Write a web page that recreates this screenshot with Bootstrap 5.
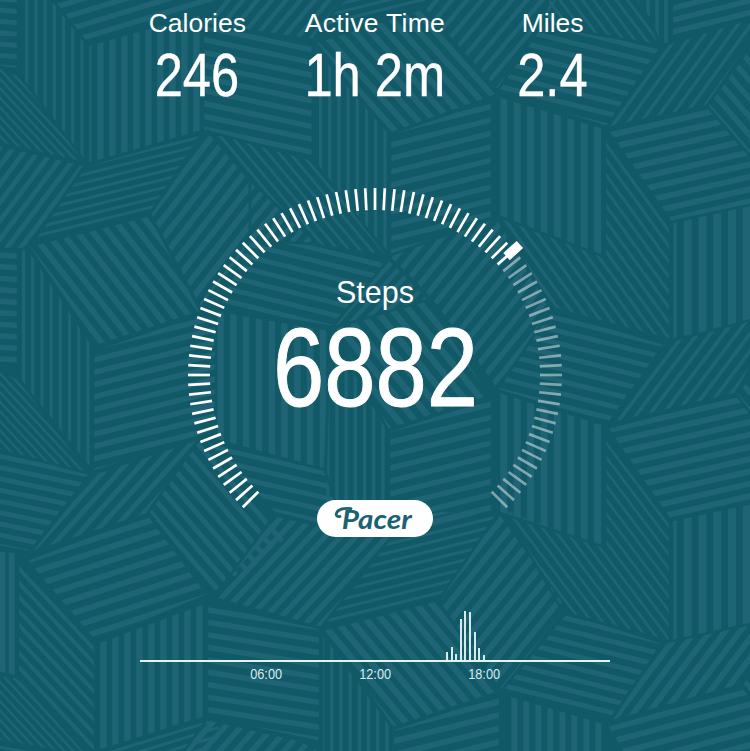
<!DOCTYPE html>
<html lang="en">
<head>
    <meta charset="UTF-8">
    <meta name="viewport" content="width=device-width, initial-scale=1.0">
    <title>Pacer</title>
    <link href="https://cdn.jsdelivr.net/npm/bootstrap@5.3.0/dist/css/bootstrap.min.css" rel="stylesheet">
    <style>
        body {
            background-color: #125967;
            font-family: "Liberation Sans", Arial, sans-serif;
            line-height: 1;
        }
        .pacer-screen {
            width: 750px;
            height: 751px;
        }
        .pattern {
            z-index: 0;
        }
        .pacer-content {
            z-index: 1;
        }
        .stats {
            width: 533px;
            height: 188px;
            padding-top: 9px;
        }
        .stat-label {
            font-size: 26.5px;
            line-height: 28px;
        }
        .stat-label.wide {
            letter-spacing: .3px;
        }
        .stat-value {
            font-size: 61px;
            line-height: 60px;
            margin-top: 8px;
            -webkit-text-stroke: .4px #fff;
        }
        .squeeze {
            display: inline-block;
            white-space: nowrap;
            transform: scaleX(.83);
        }
        .gauge {
            width: 400px;
            height: 423px;
        }
        .gauge > * {
            grid-area: 1 / 1;
        }
        .gauge svg {
            overflow: visible;
        }
        .steps-label {
            font-size: 30.5px;
            line-height: 32px;
            margin-top: 88px;
        }
        .steps-value {
            font-size: 111px;
            line-height: 112px;
            margin-top: 4px;
            -webkit-text-stroke: 1px #fff;
        }
        .brand-pill {
            width: 116px;
            height: 37px;
            margin-top: 76px;
            background-color: #fff;
            color: #1a6273;
            font: italic 700 27px/37px Lato, sans-serif;
        }
        .brand-name {
            display: inline-block;
            margin-left: 3px;
            transform: scaleX(1.1);
            transform-origin: center;
        }
        .brand-swash {
            top: 6px;
            left: 17px;
        }
        .hours {
            width: 470px;
        }
        .hour-bars {
            height: 49px;
            gap: 2.55px;
            padding-left: 306.3px;
            box-sizing: content-box;
            border-bottom: 2px solid #e3f5f3;
        }
        .hour-bars div {
            width: 2px;
            background-color: #d5ecec;
        }
        .hour-labels {
            width: 326px;
            margin-left: 72px;
            font-size: 14.5px;
            line-height: 16px;
            padding-top: 4px;
            color: #dcebed;
        }
        .hour-labels .squeeze {
            transform: scaleX(.88);
        }
    </style>
</head>
<body>
    <main class="pacer-screen position-relative overflow-hidden text-white">
        <svg class="pattern position-absolute top-0 start-0" id="pattern" width="750" height="751" viewBox="0 0 750 751" aria-hidden="true"></svg>

        <div class="pacer-content position-relative d-flex flex-column align-items-center">
            <div class="stats">
                <div class="row g-0 text-center">
                    <div class="col-4">
                        <div class="stat-label">Calories</div>
                        <div class="stat-value"><span class="squeeze">246</span></div>
                    </div>
                    <div class="col-4">
                        <div class="stat-label wide">Active Time</div>
                        <div class="stat-value"><span class="squeeze">1h 2m</span></div>
                    </div>
                    <div class="col-4">
                        <div class="stat-label">Miles</div>
                        <div class="stat-value"><span class="squeeze">2.4</span></div>
                    </div>
                </div>
            </div>

            <div class="gauge d-grid">
                <svg id="dial" width="400" height="400" viewBox="175 188 400 400" aria-hidden="true"></svg>
                <div class="d-flex flex-column align-items-center">
                    <div class="steps-label">Steps</div>
                    <div class="steps-value"><span class="squeeze">6882</span></div>
                    <div class="brand-pill rounded-pill text-center position-relative">
                        <svg class="brand-swash position-absolute" width="20" height="16" viewBox="0 0 20 16" fill="none" stroke="#1a6273" stroke-width="2.8" stroke-linecap="round" aria-hidden="true">
                            <path d="M6 10.5C1.5 11.5 1 7 4.5 4.5C8 2 12 1.9 17 2.6"/>
                        </svg>
                        <span class="brand-name">Pacer</span>
                    </div>
                </div>
            </div>

            <div class="hours">
                <div class="hour-bars d-flex align-items-end" id="hourBars"></div>
                <div class="hour-labels d-flex justify-content-between">
                    <div class="text-center w-100"><span class="squeeze">06:00</span></div>
                    <div class="text-center w-100"><span class="squeeze">12:00</span></div>
                    <div class="text-center w-100"><span class="squeeze">18:00</span></div>
                </div>
            </div>
        </div>
    </main>

    <script src="https://cdn.jsdelivr.net/npm/bootstrap@5.3.0/dist/js/bootstrap.bundle.min.js"></script>
    <script>
        // [corner points, stripe angle in degrees, pitch, stripe width]
        const tiles = [
            ['-10,-8 18,-6 18,69 -10,66', 4, 11.3, 5],
            ['19,-10 45,-10 87,44 87,164 19,80', 90, 9.2, 3.2],
            ['45,-10 88,45 203,13 270,-10 240,-40', -17, 12.5, 5.5],
            ['88,45 203,13 203,131 88,164', 90, 12, 6.5],
            ['203,25 313,43 313,158 203,131', 12, 12.5, 5.5],
            ['203,24 225,-5 345,-5 313,40', -50, 11, 4.5],
            ['318,33 345,-2 430,-2 421,8', -14, 8, 3],
            ['315,42 421,9 500,94 390,134', 48, 12, 6],
            ['423,8 432,-4 560,-4 499,92', -50, 11.5, 4.5],
            ['313,45 390,134 390,256 313,164', 90, 9.2, 3.2],
            ['390,134 492,99 492,220 390,256', -14, 13, 5.5],
            ['496,95 605,128 605,258 496,215', 90, 13.4, 7],
            ['542,24 662,46 607,127 496,93', 14, 12, 5],
            ['550,-5 641,-5 660,46 542,24', 53, 9, 3],
            ['637,-5 671,-5 671,46 662,46', 90, 9, 3.5],
            ['672,-10 755,-20 755,16 672,41', -14, 11.5, 5.5],
            ['664,45 755,17 755,35 707,106 607,128', -54, 10.5, 3.5],
            ['755,40 755,162 707,106', 49, 12, 5.5],
            ['607,130 707,106 755,162 755,204 671,222', -13, 12, 6],
            ['672,222 755,204 755,322 672,340', 90, 14.8, 8],
            ['605,136 670,224 670,340 551,308 497,216 605,257', 54, 9, 3.2],
            ['-5,65 20,76 87,164 -5,142', 47, 6.5, 2.5],
            ['-5,144 85,165 28,249 -5,249', -53, 11, 5],
            ['85,166 203,132 150,214 32,243', -14, 8, 3],
            ['208,131 250,180 250,247 200,308 150,214', -52, 12, 6],
            ['28,246 150,215 201,312 97,346', 52, 12.2, 6],
            ['18,250 28,248 93,346 93,472 18,378', 90, 9.2, 3.2],
            ['-5,250 18,250 18,370 -5,366', 4, 11.5, 5.5],
            ['93,350 201,314 218,320 218,430 93,472', -14, 12, 5.5],
            ['-5,366 20,380 90,474 -5,450', 47, 6.5, 2.5],
            ['-5,449 90,474 30,552 -5,546', 12, 11, 5],
            ['93,474 200,438 148,514 30,553', -48, 11.5, 5],
            ['200,438 288,538 213,594 148,512', 49, 11.5, 5],
            ['26,560 148,514 208,595 95,642', -18, 12.8, 6],
            ['96,643 206,602 206,717 96,752', 90, 12, 6.5],
            ['18,560 95,644 95,760 18,690', 47, 9.6, 4],
            ['-5,550 17,552 17,677 -5,672', 90, 9.5, 6],
            ['-5,675 18,677 90,757 -5,740', 47, 6.5, 2.5],
            ['-5,742 60,757 -5,757', 10, 8, 3],
            ['207,603 320,628 320,742 207,718', 9, 12.3, 5.5],
            ['96,752 207,719 225,730 205,757 96,757', -17, 8, 3],
            ['207,719 300,740 330,757 180,757', -48, 12, 5.5],
            ['275,515 345,532 392,536 321,628 213,598', -47, 11.3, 5.5],
            ['392,536 435,510 497,515 439,600 321,628', -14, 8.5, 3],
            ['322,630 437,600 499,692 393,728', 50, 12, 6.5],
            ['322,632 392,727 392,757 322,757', 90, 9.2, 3.5],
            ['393,729 500,694 500,757 393,757', -14, 13, 6],
            ['499,512 567,607 501,692 438,601', -51, 12, 6],
            ['505,694 605,723 605,757 505,757', 90, 12, 6],
            ['567,612 663,643 609,722 501,691', 14, 11.5, 5],
            ['605,435 670,520 670,642 563,612 503,508 605,547', 53, 8.5, 2.8],
            ['672,520 755,502 755,625 672,642', 90, 14.8, 8],
            ['663,643 755,623 755,655 741,685 610,722', -53, 12, 6],
            ['755,665 755,698 741,686', 49, 12, 5],
            ['607,726 741,686 755,700 755,757 625,757', -15, 13, 6],
            ['672,341 755,319 755,358 736,394 609,424', -53, 10.5, 3.8],
            ['755,370 755,420 736,394', 49, 12, 5],
            ['607,428 736,394 755,420 755,502 670,520', -13, 12, 6],
            ['551,310 665,344 608,424 497,390', 14, 12, 5],
            ['497,391 605,425 605,547 497,512', 90, 13.4, 7],
            ['388,256 497,217 551,310 497,390 432,300', -51, 12, 5.5],
            ['332,328 388,258 430,300', -48, 10, 4.5],
            ['210,132 313,160 388,256 320,246 250,180', 50, 8.5, 3],
            ['250,180 320,246 250,240', -50, 11, 5],
            ['250,240 313,244 388,260 332,327 218,308', 14, 12, 5],
            ['216,310 330,330 325,470 216,440', 90, 12.8, 6.5],
            ['330,330 388,430 388,536 325,500', 90, 9.2, 3.5],
            ['333,328 427,300 491,396 388,430', 51, 13, 6.5],
            ['389,431 492,397 492,512 389,540', -14, 12.5, 5.5],
            ['202,438 325,470 345,531 275,513', 13, 12, 5]
        ];

        function drawTiles() {
            let svg = '';
            tiles.forEach(([points, angle, pitch, width], index) => {
                const corners = points.split(' ').map(p => p.split(',').map(Number));
                const rad = angle * Math.PI / 180;
                const dx = Math.cos(rad), dy = Math.sin(rad);
                // distance of each corner along the stripe normal
                const offsets = corners.map(([x, y]) => -x * dy + y * dx);
                const min = Math.min(...offsets), max = Math.max(...offsets);
                let d = '';
                for (let o = min + pitch * 0.55; o < max; o += pitch) {
                    const cx = -dy * o, cy = dx * o;
                    d += `M${cx - dx * 1500} ${cy - dy * 1500}L${cx + dx * 1500} ${cy + dy * 1500}`;
                }
                svg += `<clipPath id="tile${index}"><polygon points="${points}"/></clipPath>
                    <path d="${d}" clip-path="url(#tile${index})" stroke="#1e6474" stroke-width="${width}"/>
                    <polygon points="${points}" fill="none" stroke="#125967" stroke-width="2.5"/>`;
            });
            document.getElementById('pattern').innerHTML = svg;
        }

        function drawDial() {
            const progress = 48;
            let svg = '';
            for (let angle = -135; angle <= 135; angle += 3) {
                svg += `<line x1="375" y1="188" x2="375" y2="210" transform="rotate(${angle} 375 375)"
                    stroke="#fff" stroke-width="2.7" stroke-opacity="${angle > progress ? 0.46 : 1}"/>`;
            }
            svg += `<rect x="370.2" y="180" width="9.6" height="18" fill="#fff" transform="rotate(${progress} 375 375)"/>`;
            document.getElementById('dial').innerHTML = svg;
        }

        function drawHours(values) {
            document.getElementById('hourBars').innerHTML = values
                .map(value => `<div style="height: ${value}px"></div>`)
                .join('');
        }

        drawTiles();
        drawDial();
        drawHours([8, 13, 6, 41, 49, 48.5, 28.5, 12.5, 5]);
    </script>
</body>
</html>
